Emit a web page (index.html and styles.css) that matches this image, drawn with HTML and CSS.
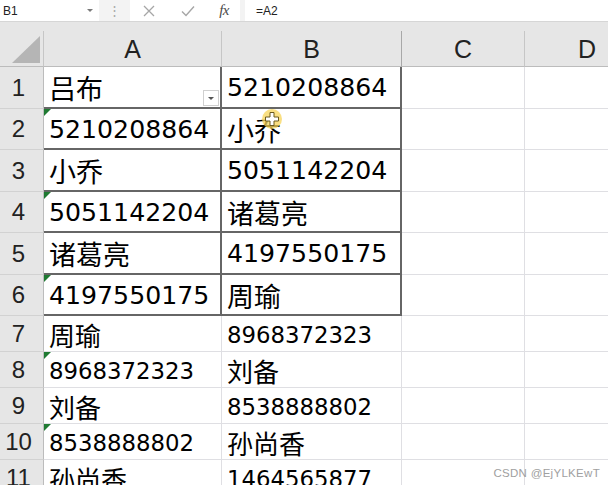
FILE: index.html
```html
<!DOCTYPE html>
<html lang="zh">
<head>
<meta charset="utf-8">
<title>Sheet</title>
<link rel="stylesheet" href="styles.css">
</head>
<body>
<div class="formula-bar">
  <div class="namebox"><span class="name">B1</span><span class="nb-arrow"></span></div>
  <div class="grip">⋮</div>
  <div class="fx-buttons">
    <svg class="ico" width="14" height="14" viewBox="0 0 14 14"><path d="M2 2 L12 12 M12 2 L2 12" stroke="#a6a6a6" stroke-width="1.3" fill="none"/></svg>
    <svg class="ico" width="16" height="14" viewBox="0 0 16 14"><path d="M2 7.5 L6 11.5 L14 2.5" stroke="#a6a6a6" stroke-width="1.4" fill="none"/></svg>
    <span class="fx">fx</span>
  </div>
  <div class="formula">=A2</div>
</div>

<div class="sheet">
  <div class="strip"></div>

  <div class="corner"><span class="tri"></span></div>
  <div class="colhead">A</div>
  <div class="colhead">B</div>
  <div class="colhead">C</div>
  <div class="colhead">D</div>

  <div class="rowhead">1</div>
  <div class="cell big tbl zh">吕布<span class="filter"></span></div>
  <div class="cell big tbl">5210208864</div>
  <div class="cell"></div><div class="cell"></div>

  <div class="rowhead">2</div>
  <div class="cell big tbl flag">5210208864</div>
  <div class="cell big tbl zh">小乔<span class="cursor"><svg width="22" height="22" viewBox="0 0 22 22"><circle cx="11" cy="11" r="10" fill="#f7d45a" opacity="0.75"/><path d="M9 4.5h4v4.5h4.5v4H13v4.5H9V13H4.5V9H9z" fill="#fff" stroke="#6b5a20" stroke-width="1"/></svg></span></div>
  <div class="cell"></div><div class="cell"></div>

  <div class="rowhead">3</div>
  <div class="cell big tbl zh">小乔</div>
  <div class="cell big tbl">5051142204</div>
  <div class="cell"></div><div class="cell"></div>

  <div class="rowhead">4</div>
  <div class="cell big tbl flag">5051142204</div>
  <div class="cell big tbl zh">诸葛亮</div>
  <div class="cell"></div><div class="cell"></div>

  <div class="rowhead">5</div>
  <div class="cell big tbl zh">诸葛亮</div>
  <div class="cell big tbl">4197550175</div>
  <div class="cell"></div><div class="cell"></div>

  <div class="rowhead">6</div>
  <div class="cell big tbl flag">4197550175</div>
  <div class="cell big tbl zh">周瑜</div>
  <div class="cell"></div><div class="cell"></div>

  <div class="rowhead">7</div>
  <div class="cell small zh">周瑜</div>
  <div class="cell small">8968372323</div>
  <div class="cell"></div><div class="cell"></div>

  <div class="rowhead">8</div>
  <div class="cell small flag">8968372323</div>
  <div class="cell small zh">刘备</div>
  <div class="cell"></div><div class="cell"></div>

  <div class="rowhead">9</div>
  <div class="cell small zh">刘备</div>
  <div class="cell small">8538888802</div>
  <div class="cell"></div><div class="cell"></div>

  <div class="rowhead">10</div>
  <div class="cell small flag">8538888802</div>
  <div class="cell small zh">孙尚香</div>
  <div class="cell"></div><div class="cell"></div>

  <div class="rowhead">11</div>
  <div class="cell small zh">孙尚香</div>
  <div class="cell small">1464565877</div>
  <div class="cell"></div><div class="cell"></div>
</div>

<div class="watermark">CSDN @EjYLKEwT</div>
</body>
</html>
```

FILE: styles.css
```css
* { box-sizing: border-box; }
html, body {
  margin: 0;
  padding: 0;
}
body {
  width: 608px;
  height: 485px;
  overflow: hidden;
  background: #ffffff;
  font-family: "DejaVu Sans", "Noto Sans CJK SC", sans-serif;
  color: #000;
  position: relative;
}

/* ---------- formula bar ---------- */
.formula-bar {
  display: flex;
  height: 22px;
  background: #f3f3f3;
  border-bottom: 1px solid #d6d6d6;
  font-family: "Liberation Sans", "Noto Sans CJK SC", sans-serif;
}
.namebox {
  width: 99px;
  background: #fff;
  display: flex;
  align-items: center;
  justify-content: space-between;
  padding: 0 6px 0 3px;
  font-size: 12px;
  color: #222;
}
.nb-arrow {
  width: 0; height: 0;
  border-left: 3px solid transparent;
  border-right: 3px solid transparent;
  border-top: 3px solid #7a7a7a;
}
.grip {
  width: 31px;
  display: flex;
  align-items: center;
  justify-content: center;
  color: #a8a8a8;
  font-size: 13px;
}
.fx-buttons {
  width: 110px;
  background: #fff;
  display: flex;
  align-items: center;
  justify-content: space-between;
  padding: 0 11px 0 12px;
}
.fx {
  font-family: "Liberation Serif", serif;
  font-style: italic;
  font-size: 15px;
  color: #4a4a4a;
  letter-spacing: -0.5px;
}
.formula {
  flex: 1;
  margin-left: 5px;
  background: #fff;
  display: flex;
  align-items: center;
  padding-left: 11px;
  font-size: 12px;
  color: #222;
}

/* ---------- sheet grid ---------- */
.sheet {
  display: grid;
  width: 650px;
  grid-template-columns: 44px 178px 180px 123px 125px;
  grid-template-rows: 9px 36px 42px 41px 42px 41px 42px 41px 36px 36px 36px 36px 36px;
}
.strip {
  grid-column: 1 / -1;
  background: #e6e6e6;
}
.corner {
  background: #e6e6e6;
  border-right: 1px solid #c6c6c6;
  border-bottom: 1px solid #bcbcbc;
  display: flex;
  align-items: flex-end;
  justify-content: flex-end;
  padding: 0 3px 3px 0;
}
.tri {
  width: 28px;
  height: 27px;
  background: #b5b5b5;
  clip-path: polygon(100% 0, 100% 100%, 0 100%);
}
.colhead {
  background: #e6e6e6;
  border-right: 1px solid #c6c6c6;
  border-bottom: 1px solid #bcbcbc;
  display: flex;
  align-items: center;
  justify-content: center;
  font-family: "Liberation Sans", sans-serif;
  font-size: 25px;
  color: #222;
  padding-top: 2px;
}
.colhead:nth-child(4) { border-right-color: #a8a8a8; }

.rowhead {
  background: #e6e6e6;
  border-right: 1px solid #bcbcbc;
  border-bottom: 1px solid #d2d2d2;
  display: flex;
  align-items: center;
  justify-content: center;
  padding-right: 6px;
  font-family: "Liberation Sans", sans-serif;
  font-size: 24px;
  color: #222;
}

.cell {
  position: relative;
  border-right: 1px solid #dfdfe3;
  border-bottom: 1px solid #dfdfe3;
  display: flex;
  align-items: center;
  padding-left: 5px;
  white-space: nowrap;
}
.cell.tbl {
  border-right: 2px solid #666;
  border-bottom: 2px solid #666;
}
.big { font-size: 25.2px; padding-top: 1px; }
.big.zh { font-size: 27px; }
.small { font-size: 22.8px; padding-top: 2px; }
.small.zh { font-size: 26px; }

.flag::before {
  content: "";
  position: absolute;
  left: 0;
  top: 0;
  width: 7px;
  height: 7px;
  background: #1f7a32;
  clip-path: polygon(0 0, 100% 0, 0 100%);
}

.filter {
  position: absolute;
  right: 1px;
  bottom: 1px;
  width: 16px;
  height: 16px;
  background: #fff;
  border: 1px solid #d0d0d0;
}
.filter::after {
  content: "";
  position: absolute;
  left: 4px;
  top: 6px;
  border-left: 3px solid transparent;
  border-right: 3px solid transparent;
  border-top: 3px solid #555;
}

.cursor {
  position: absolute;
  left: 39px;
  top: -1px;
  width: 22px;
  height: 22px;
}
.cursor svg { display: block; }

.watermark {
  position: absolute;
  right: 8px;
  bottom: 6px;
  font-family: "Liberation Sans", sans-serif;
  font-size: 11.5px;
  color: #a0a0a0;
  letter-spacing: 0.3px;
}
```
